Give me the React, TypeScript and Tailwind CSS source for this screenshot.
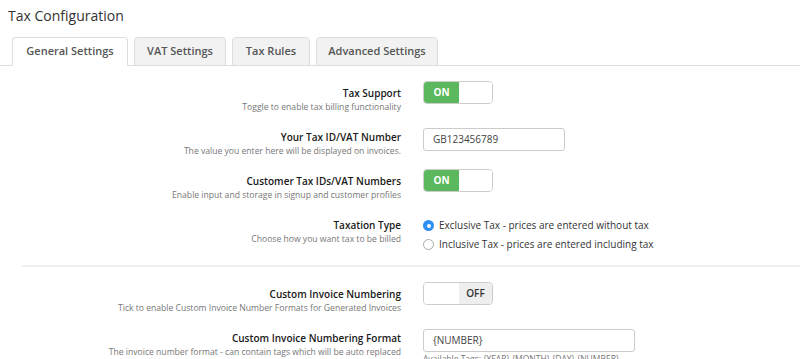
import React, { useState } from 'react';

const font = { fontFamily: '"Open Sans", "Liberation Sans", sans-serif' };

type RowProps = { label: string; hint: string; children: React.ReactNode };

const Row: React.FC<RowProps> = ({ label, hint, children }) => (
  <div className="flex h-[44px]">
    <div className="w-[401px] shrink-0 pt-[5px] text-right">
      <div className="text-[10px] leading-[14px] font-semibold text-[#1a1a1a]">{label}</div>
      <div className="text-[8.6px] leading-[14px] text-[#777]">{hint}</div>
    </div>
    <div className="pl-[22px]">{children}</div>
  </div>
);

const Toggle: React.FC<{ on: boolean; onClick: () => void }> = ({ on, onClick }) => (
  <button
    onClick={onClick}
    className="flex h-[23px] w-[70px] overflow-hidden rounded-[4px] border border-[#ccc] bg-white"
  >
    {on ? (
      <>
        <span className="flex h-full w-[35px] items-center justify-center bg-[#5cb85c] text-[10px] font-bold text-white">ON</span>
        <span className="h-full flex-1 bg-white" />
      </>
    ) : (
      <>
        <span className="h-full w-[35px] bg-white" />
        <span className="flex h-full flex-1 items-center justify-center bg-[#eee] text-[10px] font-semibold text-[#333]">OFF</span>
      </>
    )}
  </button>
);

const Radio: React.FC<{ checked: boolean; label: string; onClick: () => void }> = ({ checked, label, onClick }) => (
  <label onClick={onClick} className="flex h-[19px] cursor-pointer items-center gap-[5px] text-[10px] text-[#333]">
    {checked ? (
      <span className="flex h-[11px] w-[11px] items-center justify-center rounded-full bg-[#2f8ff5]">
        <span className="h-[4px] w-[4px] rounded-full bg-white" />
      </span>
    ) : (
      <span className="h-[11px] w-[11px] rounded-full border border-[#aaa] bg-white" />
    )}
    {label}
  </label>
);

const tabs = [
  { name: 'General Settings', w: 'w-[116px]' },
  { name: 'VAT Settings', w: 'w-[92px]' },
  { name: 'Tax Rules', w: 'w-[78px]' },
  { name: 'Advanced Settings', w: 'w-[122px]' },
];

export default function App() {
  const [active, setActive] = useState(0);
  const [taxSupport, setTaxSupport] = useState(true);
  const [customerIds, setCustomerIds] = useState(true);
  const [numbering, setNumbering] = useState(false);
  const [exclusive, setExclusive] = useState(true);

  return (
    <div style={font} className="h-[359px] w-[800px] overflow-hidden bg-white">
      <h1 className="pl-[8px] pt-[5px] text-[14px] leading-[22px] text-[#333]">Tax Configuration</h1>

      {/* tabs */}
      <div className="mt-[10px] flex gap-[6px] border-b border-[#ddd] pl-[12px]">
        {tabs.map((t, i) => (
          <button
            key={t.name}
            onClick={() => setActive(i)}
            className={`${t.w} -mb-px h-[29px] rounded-t-[4px] border text-[11px] font-semibold text-[#555] ${
              i === active ? 'border-[#ddd] border-b-white bg-white' : 'border-[#ddd] bg-[#f2f2f2]'
            }`}
          >
            {t.name}
          </button>
        ))}
      </div>

      <div className="pt-[15px]">
        <Row label="Tax Support" hint="Toggle to enable tax billing functionality">
          <Toggle on={taxSupport} onClick={() => setTaxSupport(!taxSupport)} />
        </Row>
        <Row label="Your Tax ID/VAT Number" hint="The value you enter here will be displayed on invoices.">
          <input
            defaultValue="GB123456789"
            className="h-[23px] w-[142px] rounded-[3px] border border-[#ccc] px-[9px] text-[10px] text-[#444] outline-none"
          />
        </Row>
        <Row label="Customer Tax IDs/VAT Numbers" hint="Enable input and storage in signup and customer profiles">
          <Toggle on={customerIds} onClick={() => setCustomerIds(!customerIds)} />
        </Row>
        <Row label="Taxation Type" hint="Choose how you want tax to be billed">
          <div className="pt-[3px]">
            <Radio checked={exclusive} label="Exclusive Tax - prices are entered without tax" onClick={() => setExclusive(true)} />
            <Radio checked={!exclusive} label="Inclusive Tax - prices are entered including tax" onClick={() => setExclusive(false)} />
          </div>
        </Row>
      </div>

      <div className="ml-[22px] mt-[8px] h-[2px] bg-[#f0f0f0]" />

      <div className="pt-[15px]">
        <Row label="Custom Invoice Numbering" hint="Tick to enable Custom Invoice Number Formats for Generated Invoices">
          <Toggle on={numbering} onClick={() => setNumbering(!numbering)} />
        </Row>
        <Row label="Custom Invoice Numbering Format" hint="The invoice number format - can contain tags which will be auto replaced">
          <input
            defaultValue="{NUMBER}"
            className="h-[23px] w-[212px] rounded-[3px] border border-[#ccc] px-[9px] text-[10px] text-[#444] outline-none"
          />
          <div className="pt-[1px] text-[8.5px] leading-[12px] text-[#777]">Available Tags: {'{YEAR}'} {'{MONTH}'} {'{DAY}'} {'{NUMBER}'}</div>
        </Row>
      </div>
    </div>
  );
}
